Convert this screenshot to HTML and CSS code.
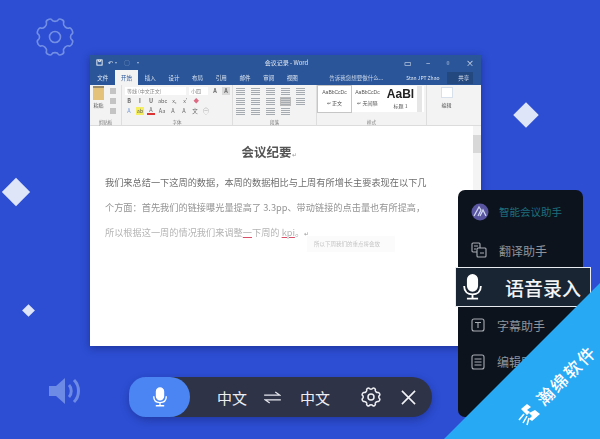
FILE: index.html
```html
<!DOCTYPE html>
<html lang="zh-CN">
<head>
<meta charset="UTF-8">
<title>会议纪要 - Word</title>
<link rel="stylesheet" href="styles.css">
</head>
<body>
<div class="stage">

  <!-- background decoration -->
  <svg class="deco gear-bg" viewBox="0 0 40 40" width="40" height="40" fill="none" stroke="#7f9be8" stroke-width="1.6">
    <path d="M16.500 2.500c1 2.500 6 2.500 7 0 1-1 2-.5 4 .5 1.500 1 1.500 2 1 3-.5 2.500 3 6 5.500 5 1.500-.5 2 .5 3 2 1 2 1.500 3 0 4-2 1-2 5 0 6 1.500 1 1 2 0 4-1 1.500-1.500 2.500-3 2-2.500-1-6 2.500-5.500 5 .5 1 .5 2-1 3-2 1-3 1.500-4 .5-1-2.500-6-2.500-7 0-1 1-2 .5-4-.5-1.500-1-1.500-2-1-3 .5-2.500-3-6-5.500-5-1.500.5-2-.5-3-2-1-2-1.500-3 0-4 2-1 2-5 0-6-1.500-1-1-2 0-4 1-1.500 1.500-2.500 3-2 2.500 1 6-2.500 5.500-5-.5-1-.5-2 1-3 2-1 3-1.500 4-.5z"/>
    <circle cx="20" cy="20" r="5.500"/>
  </svg>
  <div class="deco diamond d1"></div>
  <div class="deco diamond d2"></div>
  <div class="deco diamond d3"></div>
  <svg class="deco speaker" viewBox="0 0 34 28" width="34" height="28" fill="#6d8ae4">
    <path d="M0 9h7l9-8v26l-9-8H0z"/>
    <path d="M20 8c3 3 3 9 0 12" fill="none" stroke="#6d8ae4" stroke-width="3"/>
    <path d="M25 3c6 6 6 16 0 22" fill="none" stroke="#6d8ae4" stroke-width="3"/>
  </svg>

  <!-- word window -->
  <div class="window">
    <div class="titlebar">
      <div class="quick">
        <svg viewBox="0 0 8 8" width="7" height="7" fill="none" stroke="#fff"><rect x="1" y="1" width="6" height="6"/><path d="M3 1v2h2V1"/></svg>
        <span>↶·</span>
        <span class="dim">○</span>
        <span>·</span>
      </div>
      <div class="doc-name">会议记录 - Word</div>
      <div class="win-btns">
        <span>▭</span><span>–</span><span>▫</span><span>×</span>
      </div>
    </div>
    <div class="tabs">
      <span class="tab">文件</span>
      <span class="tab active">开始</span>
      <span class="tab">插入</span>
      <span class="tab">设计</span>
      <span class="tab">布局</span>
      <span class="tab">引用</span>
      <span class="tab">邮件</span>
      <span class="tab">审阅</span>
      <span class="tab">视图</span>
      <span class="search">告诉我您想要做什么...</span>
      <span class="user">Stan JPT Zhao</span>
      <span class="share">共享</span>
    </div>
    <div class="ribbon">
      <div class="group clip">
        <div class="paste"><i class="paste-icon"></i>粘贴</div>
        <div class="clip-tools"><i></i><i></i><i></i></div>
        <div class="group-name">剪贴板</div>
      </div>
      <div class="group font">
        <div class="tool-row">
          <span class="combo wide">等线 (中文正文)</span>
          <span class="combo">小四</span>
          <b class="mini">A</b><b class="mini boxed">A</b>
        </div>
        <div class="tool-row">
          <b class="mini">B</b><b class="mini">I</b><b class="mini">U</b><span class="mini">abc</span><span class="mini">x,</span><span class="mini">x'</span><span class="mini red">◆</span>
        </div>
        <div class="tool-row">
          <span class="mini blue">A</span><span class="mini mark">ab</span><span class="mini under">A</span><span class="mini">Aa</span><span class="mini">A</span><span class="mini">A</span><span class="mini">文</span><span class="mini">㊀</span>
        </div>
        <div class="group-name">字体</div>
      </div>
      <div class="group para">
        <div class="tool-row"><i class="lines"></i><i class="lines"></i><i class="lines"></i><i class="lines"></i><i class="lines"></i></div>
        <div class="tool-row"><i class="lines"></i><i class="lines"></i><i class="lines"></i><i class="lines on"></i><i class="lines"></i></div>
        <div class="tool-row"><i class="lines"></i><i class="lines"></i><i class="lines"></i><i class="lines"></i></div>
        <div class="group-name">段落</div>
      </div>
      <div class="group styles">
        <div class="style-list">
          <div class="style picked"><span>AaBbCcDc</span><small>↵ 正文</small></div>
          <div class="style"><span>AaBbCcDc</span><small>↵ 无间隔</small></div>
          <div class="style big"><span>AaBl</span><small>标题 1</small></div>
          <div class="style-scroll"></div>
        </div>
        <div class="group-name">样式</div>
      </div>
      <div class="group edit">
        <i class="find"></i>
        <span>编辑</span>
      </div>
    </div>
    <div class="doc">
      <h1 class="doc-title">会议纪要<span class="mark-end">↵</span></h1>
      <p class="line l1">我们来总结一下这周的数据，本周的数据相比与上周有所增长主要表现在以下几</p>
      <p class="line l2">个方面：首先我们的链接曝光量提高了 3.3pp、带动链接的点击量也有所提高，</p>
      <p class="line l3">所以根据这一周的情况我们来调整<u>一</u>下周的 <u>kpi</u>。<span class="mark-end">↵</span></p>
      <div class="hint">所以下周我们的重点将会放</div>
      <div class="scrollbar"><i class="thumb"></i></div>
    </div>
  </div>

  <!-- assistant side panel -->
  <div class="panel">
    <div class="panel-row brand">
      <svg viewBox="0 0 18 18" width="18" height="18"><circle cx="9" cy="9" r="8.500" fill="#5a55a0"/><path d="M3 13 8 4l2 3-3 6M9 13l3-6 3 6" fill="none" stroke="#cfd6f0" stroke-width="1.300"/></svg>
      <span class="brand-name">智能会议助手</span>
    </div>
    <div class="panel-row first">
      <svg viewBox="0 0 16 16" width="16" height="16" fill="none" stroke="#a9aeb5" stroke-width="1.100"><rect x="1" y="1" width="8" height="9" rx="1"/><rect x="6" y="6" width="9" height="9" rx="1" fill="#0d131c"/><path d="M3 4h4M3 7h2M9 11h4"/></svg>
      <span>翻译助手</span>
    </div>
    <div class="panel-row active">
      <svg viewBox="0 0 20 28" width="19" height="26" fill="none" stroke="#fff" stroke-width="2"><rect x="5" y="1" width="10" height="17" rx="5" fill="#fff"/><path d="M1 13c0 6 4 9 9 9s9-3 9-9M10 22v4M4 26.500h12"/></svg>
      <span>语音录入</span>
    </div>
    <div class="panel-row">
      <svg viewBox="0 0 14 14" width="14" height="14" fill="none" stroke="#a9aeb5" stroke-width="1.100"><rect x="1" y="1" width="12" height="12" rx="2"/><path d="M4 4.500h6M7 4.500v5.500"/></svg>
      <span>字幕助手</span>
    </div>
    <div class="panel-row">
      <svg viewBox="0 0 14 16" width="14" height="16" fill="none" stroke="#a9aeb5" stroke-width="1.100"><rect x="1" y="1" width="12" height="14" rx="2"/><path d="M3.500 5h7M3.500 8h7M3.500 11h7"/></svg>
      <span>编辑助手</span>
    </div>
  </div>

  <!-- bottom voice toolbar -->
  <div class="voice-bar">
    <div class="mic-btn">
      <svg viewBox="0 0 20 28" width="14" height="20" fill="none" stroke="#fff" stroke-width="2"><rect x="5" y="1" width="10" height="17" rx="5" fill="#fff"/><path d="M1 13c0 6 4 9 9 9s9-3 9-9M10 22v4M4 26.500h12"/></svg>
    </div>
    <div class="voice-tools">
      <span>中文</span>
      <svg class="swap" viewBox="0 0 18 14" width="17" height="13" fill="none" stroke="#e6e8ee" stroke-width="1.200"><path d="M0 4.500h17L12 1M18 9.500H1L6 13"/></svg>
      <span class="lang-to">中文</span>
      <svg class="tool-gear" viewBox="0 0 40 40" width="20" height="20" fill="none" stroke="#eef0f4" stroke-width="3">
        <path d="M16.500 2.500c1 2.500 6 2.500 7 0 1-1 2-.5 4 .5 1.500 1 1.500 2 1 3-.5 2.500 3 6 5.500 5 1.500-.5 2 .5 3 2 1 2 1.500 3 0 4-2 1-2 5 0 6 1.500 1 1 2 0 4-1 1.500-1.500 2.500-3 2-2.500-1-6 2.500-5.500 5 .5 1 .5 2-1 3-2 1-3 1.500-4 .5-1-2.500-6-2.500-7 0-1 1-2 .5-4-.5-1.500-1-1.500-2-1-3 .5-2.500-3-6-5.500-5-1.500.5-2-.5-3-2-1-2-1.500-3 0-4 2-1 2-5 0-6-1.500-1-1-2 0-4 1-1.500 1.500-2.500 3-2 2.500 1 6-2.500 5.500-5-.5-1-.5-2 1-3 2-1 3-1.500 4-.5z"/>
        <circle cx="20" cy="20" r="6"/>
      </svg>
      <svg viewBox="0 0 16 16" width="15" height="15" stroke="#f2f3f6" stroke-width="1.700"><path d="M1 1l14 14M15 1 1 15"/></svg>
    </div>
  </div>

  <!-- corner watermark -->
  <div class="corner"></div>
  <svg class="corner-logo" viewBox="0 0 22 24" width="22" height="24" fill="#fff">
    <path d="M3 6l6-5 4 3-4 3 3 2-3 3zM11 10l6-3 5 4-8 7-3-2 3-3z"/>
    <path d="M6 11l-5 6M9 13l-4 7M11 15l-2 7" fill="none" stroke="#fff" stroke-width="1.500"/>
  </svg>
  <div class="corner-name">瀚绵软件</div>
</div>
</body>
</html>
```

FILE: styles.css
```css
* {
  box-sizing: border-box;
}
body {
  margin: 0;
  font-family: "Noto Sans CJK SC", "Liberation Sans", sans-serif;
}
.stage {
  position: relative;
  width: 600px;
  height: 439px;
  overflow: hidden;
  background-color: #2d4ed3;
}
.deco {
  position: absolute;
}
.gear-bg {
  left: 35px;
  top: 17px;
  opacity: 0.85;
}
.diamond {
  background-color: #dfe5f8;
  transform: rotate(45deg);
}
.d1 {
  left: 6px;
  top: 182px;
  width: 20px;
  height: 20px;
}
.d2 {
  left: 24px;
  top: 306px;
  width: 9px;
  height: 9px;
}
.d3 {
  left: 517px;
  top: 106px;
  width: 18px;
  height: 18px;
}
.speaker {
  left: 49px;
  top: 377px;
}

/* word window */
.window {
  position: absolute;
  left: 90px;
  top: 55px;
  width: 391px;
  height: 291px;
  display: flex;
  flex-direction: column;
  background-color: #fff;
  box-shadow: 0 2px 8px rgba(10, 20, 80, 0.45);
  filter: blur(0.35px);
}
.titlebar {
  height: 15px;
  padding: 0 7px 0 6px;
  display: flex;
  align-items: center;
  justify-content: space-between;
  background-color: #2a5699;
  color: #e3e9f3;
  font-size: 6px;
}
.quick {
  width: 120px;
  display: flex;
  align-items: center;
  gap: 5px;
}
.quick .dim {
  opacity: 0.4;
}
.doc-name {
  flex: 1;
  padding-right: 47px;
  text-align: center;
}
.win-btns {
  width: 70px;
  display: flex;
  justify-content: space-between;
  font-size: 8px;
}
.tabs {
  height: 15px;
  padding-left: 1px;
  display: flex;
  align-items: center;
  background-color: #2a5699;
  color: #dfe6f1;
  font-size: 5.500px;
}
.tab {
  width: 23.700px;
  height: 100%;
  display: flex;
  align-items: center;
  justify-content: center;
}
.tab.active {
  background-color: #f3f3f3;
  color: #2a5699;
}
.search {
  margin-left: 18px;
  width: 84px;
  padding-left: 7px;
  overflow: hidden;
  white-space: nowrap;
  color: #c9d5e8;
}
.user {
  width: 41px;
  font-size: 5px;
  white-space: nowrap;
}
.share {
  width: 26px;
  padding: 2px 0 2px 11px;
  background-color: #23487f;
}
.ribbon {
  height: 41px;
  display: flex;
  background-color: #f3f3f3;
  border-bottom: 1px solid #dcdcdc;
  color: #555;
  font-size: 5px;
}
.group {
  position: relative;
  padding: 1px 2px 0 3px;
  border-right: 1px solid #dedede;
}
.group-name {
  position: absolute;
  left: 0;
  right: 0;
  bottom: 0;
  text-align: center;
  color: #777;
  font-size: 4.500px;
}
.clip {
  width: 32px;
  display: flex;
  gap: 6px;
}
.paste {
  display: flex;
  flex-direction: column;
  align-items: center;
  gap: 1px;
}
.paste-icon {
  width: 11px;
  height: 14px;
  background-color: #e5c27a;
  border-top: 2px solid #9b8a68;
}
.clip-tools {
  display: flex;
  flex-direction: column;
  gap: 4px;
  padding-top: 2px;
}
.clip-tools i {
  width: 6px;
  height: 6px;
  background-color: #c4c4c4;
}
.font {
  width: 111px;
}
.tool-row {
  height: 10px;
  display: flex;
  align-items: center;
  gap: 3px;
}
.combo {
  height: 8px;
  padding-left: 2px;
  background-color: #fff;
  color: #888;
  line-height: 8px;
}
.combo.wide {
  width: 65px;
}
.combo:not(.wide) {
  width: 20px;
}
.mini {
  min-width: 8px;
  text-align: center;
  font-size: 5.500px;
  line-height: 8px;
  color: #666;
}
.boxed {
  background-color: #d9d9d9;
}
.red {
  color: #dd6a82;
}
.blue {
  color: #6f97d6;
}
.mark {
  background-color: #f5ee5e;
}
.under {
  border-bottom: 2px solid #d33;
  line-height: 6px;
}
.para {
  width: 84px;
}
.para .tool-row {
  gap: 6px;
}
.lines {
  width: 9px;
  height: 7px;
  background: repeating-linear-gradient(#a6abb2 0 1px, transparent 1px 2px);
}
.lines.on {
  background-color: #cfcfcf;
  outline: 1px solid #bbb;
}
.styles {
  width: 110px;
  padding-left: 1px;
}
.style-list {
  display: flex;
  height: 26px;
  background-color: #fff;
}
.style {
  width: 33px;
  padding-top: 3px;
  display: flex;
  flex-direction: column;
  align-items: center;
  gap: 4px;
  font-size: 5px;
  font-family: "Liberation Sans", sans-serif;
}
.style small {
  font-size: 5px;
  font-family: "Noto Sans CJK SC", sans-serif;
}
.style.picked {
  outline: 1px solid #c6c6c6;
}
.style.big {
  padding-top: 1px;
  gap: 1px;
}
.style.big span {
  font-size: 12px;
  line-height: 14px;
  font-weight: 700;
  color: #222;
}
.style-scroll {
  width: 5px;
  background-color: #e6e6e6;
}
.edit {
  flex: 1;
  padding-top: 2px;
  padding-right: 18px;
  display: flex;
  flex-direction: column;
  align-items: center;
  gap: 3px;
  border-right: 0;
}
.find {
  width: 12px;
  height: 11px;
  background-color: #fff;
  border: 1px solid #d8e0ec;
}
.doc {
  position: relative;
  flex: 1;
  padding: 16px 20px 0 15px;
  background-color: #fff;
  color: #6e6e6e;
}
.doc-title {
  margin: 0 0 10px;
  padding-right: 28px;
  text-align: center;
  font-size: 12.500px;
  font-weight: 700;
  line-height: 19px;
  color: #555;
}
.mark-end {
  font-size: 6px;
  font-weight: 400;
  color: #999;
}
.line {
  margin: 0 0 9px;
  height: 16px;
  font-size: 9.200px;
  line-height: 16px;
  white-space: nowrap;
}
.l2 {
  color: #939393;
}
.l3 {
  color: #b4b4b4;
}
.l3 u {
  text-decoration-color: #d9506a;
}
.hint {
  position: absolute;
  left: 217px;
  top: 110px;
  width: 88px;
  height: 16px;
  padding-left: 7px;
  background-color: #fbfbfb;
  color: #c4c4c4;
  font-size: 5.500px;
  line-height: 16px;
  white-space: nowrap;
}
.scrollbar {
  position: absolute;
  right: 0;
  top: 0;
  bottom: 0;
  width: 8px;
  padding-top: 9px;
  background-color: #f4f4f4;
}
.thumb {
  display: block;
  height: 18px;
  background-color: #d8d8d8;
}

/* side panel */
.panel {
  position: absolute;
  left: 458px;
  top: 190px;
  width: 125px;
  height: 227px;
  border-radius: 7px;
  background-color: #0d131c;
  color: #8f949b;
  font-size: 12px;
}
.panel-row {
  height: 37px;
  padding-left: 13px;
  display: flex;
  align-items: center;
  gap: 12px;
}
.panel-row.brand {
  height: 43px;
  font-size: 10.500px;
  gap: 10px;
}
.panel-row.first {
  height: 34px;
}
.brand-name {
  color: #1d6f7c;
}
.panel-row.active {
  width: 136px;
  height: 40px;
  margin: 0 0 0 -3px;
  padding-left: 7px;
  gap: 23px;
  border: 1px solid #e8ecf0;
  background-color: #1a2533;
  color: #f2f4f6;
  font-size: 19px;
  font-weight: 500;
  white-space: nowrap;
}
.panel-row.active + .panel-row {
  height: 36px;
}

/* voice bar */
.voice-bar {
  position: absolute;
  left: 129px;
  top: 377px;
  width: 303px;
  height: 40px;
  display: flex;
  border-radius: 20px;
  background-color: #2e3348;
  box-shadow: 0 3px 8px rgba(15, 25, 90, 0.4);
  color: #eceef2;
  font-size: 15px;
}
.mic-btn {
  width: 61px;
  height: 40px;
  display: flex;
  align-items: center;
  justify-content: center;
  border-radius: 20px 24px 24px 20px;
  background-color: #4a85f3;
}
.voice-tools {
  flex: 1;
  padding-left: 27px;
  display: flex;
  align-items: center;
}
.swap {
  margin-left: 17px;
}
.lang-to {
  margin-left: 19px;
}
.tool-gear {
  margin-left: 31px;
  margin-right: 20px;
}

/* corner watermark */
.corner {
  position: absolute;
  right: 0;
  bottom: 0;
  width: 156px;
  height: 156px;
  background-color: #28a9f4;
  clip-path: polygon(100% 0, 100% 100%, 0 100%);
}
.corner-logo {
  position: absolute;
  left: 518px;
  top: 403px;
}
.corner-name {
  position: absolute;
  left: 528px;
  top: 366px;
  width: 76px;
  color: #fff;
  font-size: 17px;
  font-weight: 500;
  line-height: 18px;
  letter-spacing: 2px;
  white-space: nowrap;
  transform: rotate(-45deg);
}
```
